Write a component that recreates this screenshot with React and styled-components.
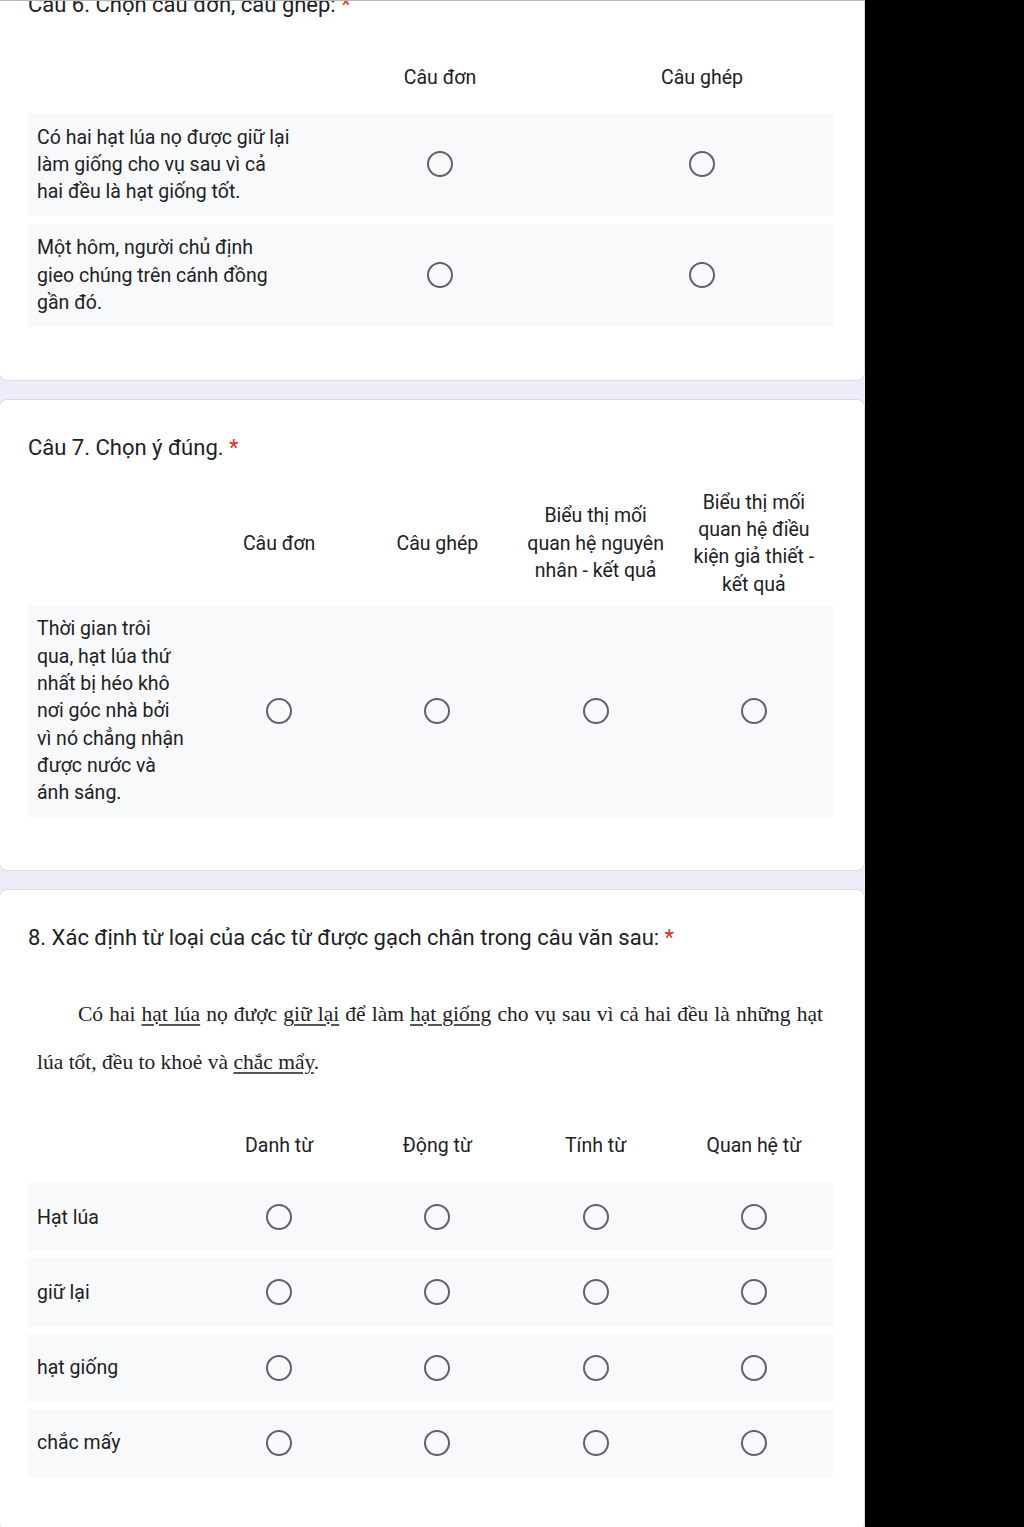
import React from 'react';
import styled, { createGlobalStyle } from 'styled-components';

const GlobalStyle = createGlobalStyle`
  html, body { margin: 0; padding: 0; background: #000; }
  body {
    font-family: Roboto, "Noto Sans", sans-serif;
    color: #202124;
    overflow: hidden;
  }
`;

const Page = styled.main`
  position: relative;
  width: 865px;
  height: 1527px;
  overflow: hidden;
  background: #f0ebf8;
  display: flex;
  flex-direction: column;
  gap: 18px;

  &::before {
    content: '';
    position: absolute;
    left: 0;
    right: 0;
    top: 0;
    height: 1px;
    background: #b8b8b8;
    z-index: 2;
  }
`;

const Card = styled.section`
  flex: none;
  background: #fff;
  border: 1px solid #dadce0;
  border-radius: 8px;
  margin: ${p => p.$top || 0}px 0 0 -1px;
  padding: 34px 31px 53px 28px;
`;

const Title = styled.h2`
  margin: 0;
  font-family: Roboto, "Noto Sans", sans-serif;
  font-weight: 400;
  font-size: 22px;
  line-height: 28px;
  color: #202124;
`;

const Star = styled.span`
  color: #d93025;
`;

const Passage = styled.p`
  margin: 38px 0 0;
  padding: 0 10px 0 9px;
  font-family: "Liberation Serif", "Times New Roman", serif;
  font-size: 21.5px;
  line-height: 48px;
  text-indent: 41px;
  text-align: justify;
  color: #222;
`;

const Under = styled.span`
  text-decoration: underline;
  text-decoration-color: #555;
  text-underline-offset: 3px;
`;

const Grid = styled.div`
  margin-top: ${p => p.$gap}px;
`;

const HeadRow = styled.div`
  display: grid;
  grid-template-columns: ${p => p.$cols};
  align-items: center;
  min-height: 60px;
  margin-bottom: ${p => p.$after}px;
`;

const HeadCell = styled.div`
  font-size: 19.5px;
  line-height: 27.3px;
  text-align: center;
  padding: 0 3px;
`;

const Body = styled.div`
  display: flex;
  flex-direction: column;
  gap: ${p => p.$rowGap}px;
`;

const Row = styled.div`
  display: grid;
  grid-template-columns: ${p => p.$cols};
  align-items: center;
  background: #f8f9fa;
  padding: ${p => p.$pad}px 0;
`;

const Label = styled.div`
  padding: 0 9px;
  font-size: 19.5px;
  line-height: 27.3px;
  white-space: nowrap;
`;

const RadioCell = styled.div`
  display: flex;
  justify-content: center;
`;

const Radio = styled.span`
  width: 26px;
  height: 26px;
  box-sizing: border-box;
  border: 2px solid #5f6368;
  border-radius: 50%;
`;

const Lines = ({ lines }) => lines.map((l, i) => (
  <React.Fragment key={i}>{l}{i < lines.length - 1 && <br />}</React.Fragment>
));

function Matrix({ cols, heads, rows, gap, after, rowGap, pad }) {
  return (
    <Grid $gap={gap}>
      <HeadRow $cols={cols} $after={after}>
        <div />
        {heads.map((h, i) => <HeadCell key={i}><Lines lines={h} /></HeadCell>)}
      </HeadRow>
      <Body $rowGap={rowGap}>
        {rows.map((r, i) => (
          <Row key={i} $cols={cols} $pad={pad}>
            <Label><Lines lines={r} /></Label>
            {heads.map((_, j) => <RadioCell key={j}><Radio /></RadioCell>)}
          </Row>
        ))}
      </Body>
    </Grid>
  );
}

const COLS2 = '281px 1fr 1fr';
const COLS4 = '172px repeat(4, 1fr)';

export default function App() {
  return (
    <>
      <GlobalStyle />
      <Page>
        <Card $top={-44}>
          <Title>Câu 6. Chọn câu đơn, câu ghép: <Star>*</Star></Title>
          <Matrix
            cols={COLS2}
            gap={29}
            after={5}
            rowGap={8}
            pad={10.5}
            heads={[['Câu đơn'], ['Câu ghép']]}
            rows={[
              ['Có hai hạt lúa nọ được giữ lại', 'làm giống cho vụ sau vì cả', 'hai đều là hạt giống tốt.'],
              ['Một hôm, người chủ định', 'gieo chúng trên cánh đồng', 'gần đó.'],
            ]}
          />
        </Card>

        <Card>
          <Title>Câu 7. Chọn ý đúng. <Star>*</Star></Title>
          <Matrix
            cols={COLS4}
            gap={27}
            after={7}
            rowGap={8}
            pad={10.5}
            heads={[
              ['Câu đơn'],
              ['Câu ghép'],
              ['Biểu thị mối', 'quan hệ nguyên', 'nhân - kết quả'],
              ['Biểu thị mối', 'quan hệ điều', 'kiện giả thiết -', 'kết quả'],
            ]}
            rows={[
              ['Thời gian trôi', 'qua, hạt lúa thứ', 'nhất bị héo khô', 'nơi góc nhà bởi', 'vì nó chẳng nhận', 'được nước và', 'ánh sáng.'],
            ]}
          />
        </Card>

        <Card>
          <Title>8. Xác định từ loại của các từ được gạch chân trong câu văn sau: <Star>*</Star></Title>
          <Passage>
            Có hai <Under>hạt lúa</Under> nọ được <Under>giữ lại</Under> để làm <Under>hạt giống</Under> cho vụ sau vì cả hai đều là những hạt lúa tốt, đều to khoẻ và <Under>chắc mẩy</Under>.
          </Passage>
          <Matrix
            cols={COLS4}
            gap={30}
            after={7}
            rowGap={7}
            pad={20.5}
            heads={[['Danh từ'], ['Động từ'], ['Tính từ'], ['Quan hệ từ']]}
            rows={[['Hạt lúa'], ['giữ lại'], ['hạt giống'], ['chắc mấy']]}
          />
        </Card>
      </Page>
    </>
  );
}
